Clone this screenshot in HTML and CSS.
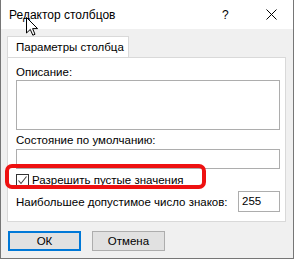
FILE: index.html
```html
<!DOCTYPE html>
<html><head>
  <meta charset="UTF-8">
  <title>Редактор столбцов</title>
  <link rel="stylesheet" href="styles.css">
</head><body>
<div id="window">
  <div id="titlebar">
    <span class="title">Редактор столбцов</span>
    <span class="help">?</span>
    <svg class="close" width="11" height="11" viewBox="0 0 11 11"><path d="M0.5 0.5L10.5 10.5M10.5 0.5L0.5 10.5" stroke="#000" stroke-width="1" fill="none"/></svg>
  </div>
  <div id="main">
    <div class="tabs"><div class="tab">Параметры столбца</div></div>
    <div class="panel">
      <div class="label first">Описание:</div>
      <div class="box area"></div>
      <div class="label">Состояние по умолчанию:</div>
      <div class="box line"></div>
      <div class="checkrow">
        <span class="check"><svg width="11" height="11" viewBox="0 0 11 11"><path d="M1.5 5.5L4 8.5L9.5 1.5" stroke="#444" stroke-width="1.1" fill="none"/></svg></span>
        <span>Разрешить пустые значения</span>
        <div class="mark"></div>
      </div>
      <div class="maxrow">
        <span>Наибольшее допустимое число знаков:</span>
        <div class="box num">255</div>
      </div>
    </div>
    <div class="buttons">
      <div class="btn default">ОК</div>
      <div class="btn">Отмена</div>
    </div>
  </div>
  <svg class="cursor" width="13" height="19" viewBox="0 0 13 19"><path d="M0.5 0.5V16L4.3 12.4L6.8 18.2L9 17.3L6.6 11.6H11.6Z" fill="#fff" stroke="#000" stroke-width="1" stroke-linejoin="round"/></svg>
</div>
</body>
</html>
```
FILE: styles.css
```css
html,body{
  margin:0;
  background:#fff;
}
body{
  font-family:"Liberation Sans",Arial,sans-serif;
  font-size:11.5px;
  color:#000;
  white-space:nowrap;
}
#window{
  position:relative;
  width:292px;
  height:258px;
  border:1px solid #767676;
  border-top:none;
  background:#f0f0f0;
  display:flex;
  flex-direction:column;
}
#titlebar{
  height:29px;
  background:#fff;
  display:flex;
  align-items:center;
  padding-left:8px;
}
.title{
  flex:1;
  font-size:12px;
}
.help{
  width:12px;
  margin-right:32px;
  font-size:12px;
}
.close{
  margin-right:16px;
}
#main{
  padding:7px 6px 0 6px;
}
.tabs{
  display:flex;
}
.tab{
  width:122px;
  height:21px;
  line-height:21px;
  background:#fff;
  border:1px solid #d9d9d9;
  border-bottom:none;
  padding-left:8px;
  box-sizing:border-box;
}
.panel{
  background:#fff;
  border:1px solid #d9d9d9;
  width:279px;
  padding:0 5px 9px 8px;
  box-sizing:border-box;
}
.label{
  height:16px;
  line-height:16px;
  margin-top:2px;
  margin-bottom:1px;
}
.label.first{
  margin-top:6px;
  margin-bottom:0;
}
.box{
  border:1px solid #adadad;
  background:#fff;
  box-sizing:border-box;
}
.area{
  height:50px;
}
.line{
  height:20px;
}
.checkrow{
  position:relative;
  display:flex;
  align-items:center;
  height:18px;
  margin-top:2px;
}
.check{
  width:13px;
  height:13px;
  border:1px solid #333;
  box-sizing:border-box;
  margin-right:3px;
  display:flex;
  align-items:center;
  justify-content:center;
}
.check svg{
  display:block;
}
.mark{
  position:absolute;
  left:-11px;
  top:-7px;
  width:193px;
  height:17px;
  border:4px solid #ee1111;
  border-radius:7px;
}
.maxrow{
  display:flex;
  align-items:center;
  justify-content:space-between;
  margin-top:2px;
}
.num{
  width:42px;
  height:21px;
  line-height:19px;
  padding-left:3px;
}
.buttons{
  display:flex;
  gap:11px;
  margin-top:9px;
  padding-left:1px;
}
.btn{
  width:73px;
  height:20px;
  line-height:18px;
  text-align:center;
  background:#e1e1e1;
  border:1px solid #adadad;
  box-sizing:border-box;
}
.btn.default{
  border:2px solid #0078d7;
  line-height:16px;
}
.cursor{
  position:absolute;
  left:25px;
  top:17px;
}
```
